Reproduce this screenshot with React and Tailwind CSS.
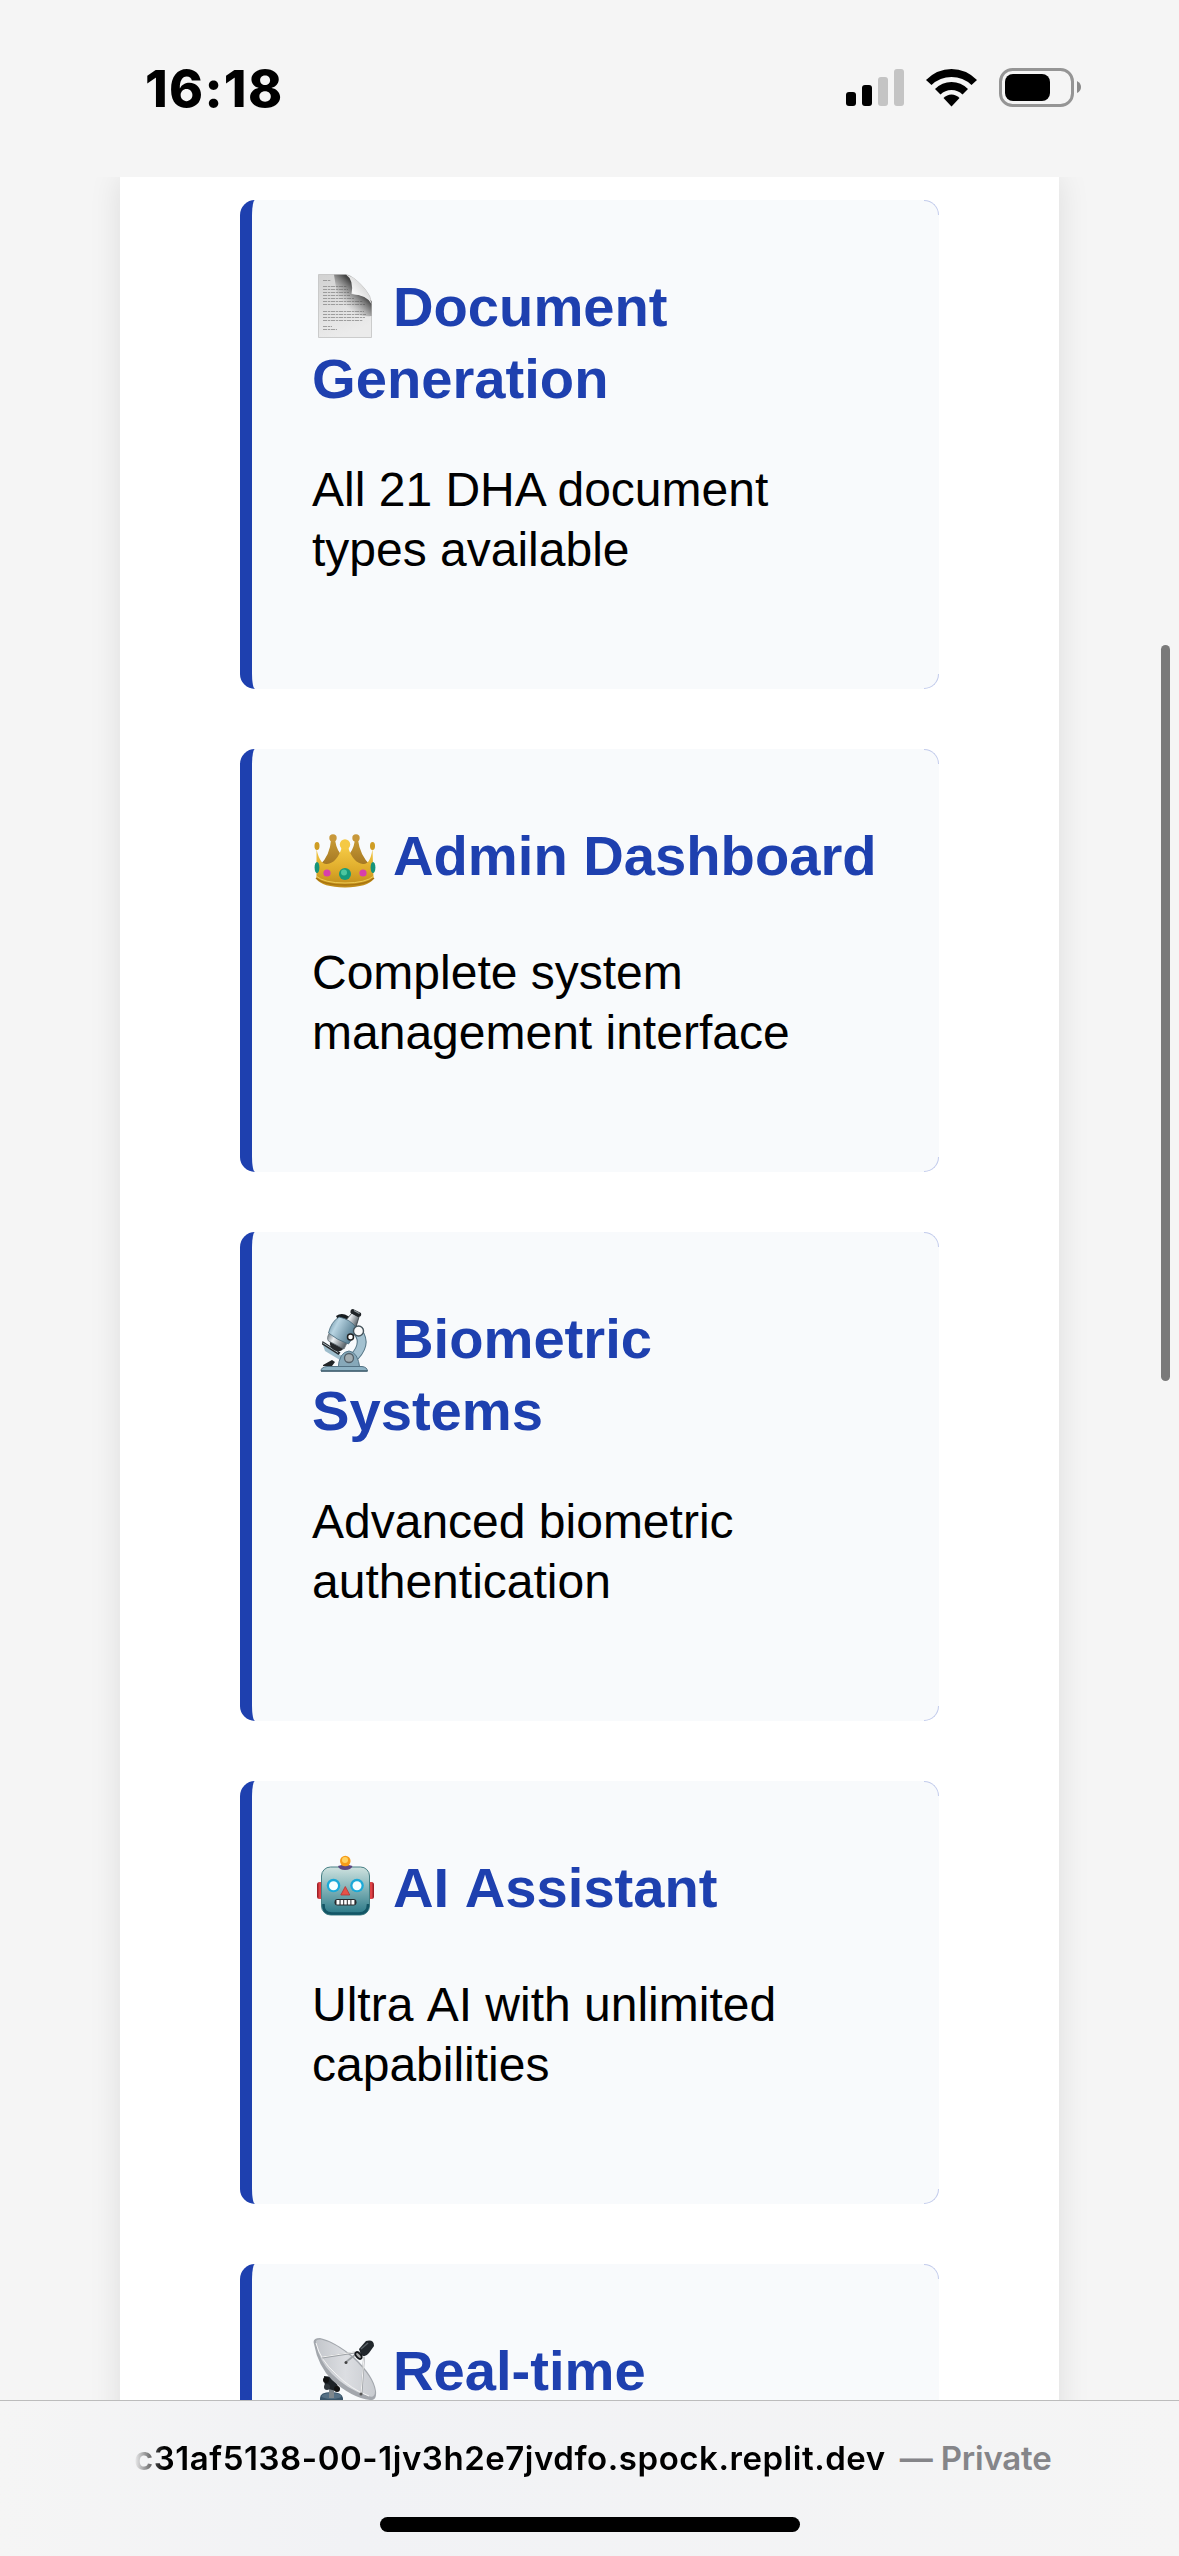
const Doc = () => (
  <svg viewBox="0 0 66 73" className="h-[73px] w-[66px] shrink-0">
    <defs>
      <linearGradient id="docPage" x1="0" y1="0" x2="0.3" y2="1">
        <stop offset="0" stopColor="#d2d2d2" />
        <stop offset="1" stopColor="#ebebeb" />
      </linearGradient>
      <linearGradient id="docShade" x1="0.95" y1="0.05" x2="0.3" y2="0.75">
        <stop offset="0" stopColor="#111" />
        <stop offset="0.45" stopColor="#222" stopOpacity="0.8" />
        <stop offset="1" stopColor="#888" stopOpacity="0" />
      </linearGradient>
      <linearGradient id="docCurl" x1="0.1" y1="0.9" x2="0.7" y2="0.3">
        <stop offset="0" stopColor="#b4b4b4" />
        <stop offset="0.4" stopColor="#f7f7f7" />
        <stop offset="1" stopColor="#d5d5d5" />
      </linearGradient>
    </defs>
    <path d="M6.5 4.5H34Q42 6 53 19Q59 26 59.5 33V67.5H6.5Z" fill="url(#docPage)" stroke="#c2c2c2" strokeWidth="0.8" />
    <g stroke="#8b8b8b" strokeWidth="0.8" strokeDasharray="4 0.8 2.5 0.7">
      <path d="M11 10.5h8M11 16.5h24M11 19.5h25M11 22.5h26M11 25.5h27M11 28.5h31M11 31.5h40M11 34.5h42M11 41.5h41M11 44.5h43M11 47.5h42M11 50.5h40M11 56.5h9M11 59.5h14" />
    </g>
    <path d="M22 4.8H34Q40 6 42 10L41 24Q54 25 59.5 31V46Q38 48 26 30Z" fill="url(#docShade)" />
    <path d="M34 4.5Q42 10 39.5 24Q55 25 59.5 34Q58 24 49 15Q41 6 34 4.5Z" fill="url(#docCurl)" />
  </svg>
);

const Crown = () => (
  <svg viewBox="0 0 66 73" className="h-[73px] w-[66px] shrink-0">
    <defs>
      <linearGradient id="crownFront" x1="0" y1="0" x2="0" y2="1">
        <stop offset="0" stopColor="#f5ca45" />
        <stop offset="0.55" stopColor="#dfac2b" />
        <stop offset="1" stopColor="#bd8a18" />
      </linearGradient>
      <linearGradient id="crownBack" x1="0" y1="0" x2="0" y2="1">
        <stop offset="0" stopColor="#c79a35" />
        <stop offset="1" stopColor="#96691c" />
      </linearGradient>
    </defs>
    <path d="M8 46Q18 36 19 21H23Q25 33 31 37L33 46L35 37Q41 33 43 21H46Q48 36 58 46L50 56H14Z" fill="url(#crownBack)" />
    <circle cx="21" cy="19" r="3.7" fill="#c8983a" />
    <circle cx="44" cy="19" r="3.7" fill="#c8983a" />
    <path d="M4.5 30Q8 46 15 45Q25 44 30 28H36Q41 44 51 45Q58 46 60.5 30L61.5 60Q56 68 33 68.5Q10 68 4.500 60Z" fill="url(#crownFront)" />
    <ellipse cx="5" cy="27" rx="2.5" ry="4" fill="#cf9d24" />
    <ellipse cx="60.5" cy="27" rx="2.5" ry="4" fill="#cf9d24" />
    <circle cx="33" cy="25.5" r="5.2" fill="#f5c945" />
    <path d="M4 59Q12 66 33 66T62 59" fill="none" stroke="#a87410" strokeWidth="1.5" />
    <path d="M4 57Q12 64 33 64T62 57" fill="none" stroke="#f8d862" strokeWidth="0.8" />
    <ellipse cx="5" cy="48.5" rx="2.4" ry="5.5" fill="#16947a" />
    <ellipse cx="61" cy="48.5" rx="2.4" ry="5.500" fill="#16947a" />
    <circle cx="33" cy="55" r="6" fill="#169a7c" />
    <circle cx="32" cy="53.5" r="3" fill="#4cc6a0" />
    <circle cx="15" cy="54" r="3.6" fill="#d83fac" />
    <circle cx="51" cy="54" r="3.6" fill="#d83fac" />
  </svg>
);

const Microscope = () => (
  <svg viewBox="0 0 66 73" className="h-[73px] w-[66px] shrink-0">
    <defs>
      <linearGradient id="scopeTube" x1="0" y1="0" x2="1" y2="0.5">
        <stop offset="0" stopColor="#547b8f" />
        <stop offset="0.35" stopColor="#b8d4e2" />
        <stop offset="1" stopColor="#52798d" />
      </linearGradient>
      <linearGradient id="scopeSteel" x1="0" y1="0" x2="1" y2="0.5">
        <stop offset="0" stopColor="#626b70" />
        <stop offset="0.4" stopColor="#edf1f4" />
        <stop offset="1" stopColor="#59636a" />
      </linearGradient>
    </defs>
    <path d="M46 30Q56 43 39 58" fill="none" stroke="#567686" strokeWidth="9.5" />
    <path d="M46 30Q56 43 39 58" fill="none" stroke="#a3c1d0" strokeWidth="7.5" />
    <path d="M11 43L30 54L28 58L13 49Z" fill="#9ebdcc" />
    <path d="M10.5 39L28.500 50.5L26.5 53L10 42.500Z" fill="#252a2e" />
    <path d="M11 41L26 50.500" stroke="#a8b3b8" strokeWidth="1" />
    <path d="M26 67Q27 50 37 49Q46 50 48 67Z" fill="#86a8b9" stroke="#567789" />
    <path d="M11 63L20 58L23 60L20 64H11Z" fill="#202427" />
    <path d="M9 69Q9 65 15 64.5H50Q55 65 55.5 69Z" fill="#8eb3c5" stroke="#527183" strokeWidth="1" />
    <path d="M9 69H55.500" stroke="#456272" strokeWidth="1.500" />
    <circle cx="37" cy="56" r="4.5" fill="#a3adb1" stroke="#536069" strokeWidth="1.3" />
    <path d="M24 14Q33 8 43 21Q46 26 44 29L30 25Z" fill="#181c20" />
    <path d="M40 11L47 15L44 25L33 19Z" fill="url(#scopeSteel)" stroke="#30383d" strokeWidth="0.800" />
    <path d="M41 7L49 11Q50 15 46 15L38.500 11Q38 7 41 7Z" fill="#202428" />
    <path d="M42 8.500L47.500 11.500" stroke="#92999d" strokeWidth="1.200" />
    <path d="M18 39L32 46Q29 51 22 48Q17 45 18 39Z" fill="#26292c" />
    <path d="M18 30L36 39L32 47L16.500 39Q14 36 18 30Z" fill="url(#scopeSteel)" stroke="#687278" strokeWidth="0.800" />
    <path d="M27 15Q38 17 44.500 26Q43 34 36.500 42Q25 38 16.500 31Q19 20 27 15Z" fill="url(#scopeTube)" stroke="#47687a" strokeWidth="0.800" />
    <circle cx="46.500" cy="29" r="5" fill="#fafafa" stroke="#46545c" strokeWidth="1.400" />
    <circle cx="38.500" cy="35" r="3" fill="#fff" stroke="#222" strokeWidth="1.500" />
  </svg>
);

const Robot = () => (
  <svg viewBox="0 0 66 73" className="h-[73px] w-[66px] shrink-0">
    <defs>
      <linearGradient id="robotFace" x1="0" y1="0" x2="0" y2="1">
        <stop offset="0" stopColor="#cfe2df" />
        <stop offset="0.4" stopColor="#8bb9bd" />
        <stop offset="1" stopColor="#277685" />
      </linearGradient>
      <linearGradient id="robotEar" x1="0" y1="0" x2="1" y2="0">
        <stop offset="0" stopColor="#8e1720" />
        <stop offset="0.5" stopColor="#ef4b4e" />
        <stop offset="1" stopColor="#8e1720" />
      </linearGradient>
    </defs>
    <rect x="5" y="31" width="6" height="17" rx="2.5" fill="url(#robotEar)" />
    <rect x="56" y="31" width="6" height="17" rx="2.5" fill="url(#robotEar)" />
    <rect x="9.5" y="16" width="48" height="48" rx="9" fill="url(#robotFace)" stroke="#467f84" strokeWidth="1" />
    <path d="M11.5 53Q11 62.500 20 62.500H47Q56 62.500 56 53" fill="none" stroke="#135565" strokeWidth="2.5" />
    <path d="M26 15Q33 12 40.5 15Q39 19 33 19T26 15Z" fill="#5b4681" />
    <path d="M29.5 10h7.5v4.500h-7.5z" fill="#ed8a15" />
    <circle cx="33.3" cy="10" r="5.3" fill="#f59c1a" />
    <circle cx="33" cy="9" r="3" fill="#ffd261" />
    <circle cx="21.5" cy="34.5" r="6.800" fill="#1aa9d8" />
    <circle cx="45" cy="34.5" r="6.800" fill="#1aa9d8" />
    <circle cx="21.5" cy="34.8" r="4.5" fill="#f7ffff" />
    <circle cx="45" cy="34.8" r="4.5" fill="#f7ffff" />
    <path d="M33.3 35.5L37.8 44H28.8Z" fill="#e75248" stroke="#b53434" strokeWidth="0.8" strokeLinejoin="round" />
    <rect x="22.5" y="48" width="22" height="6.5" rx="3.25" fill="#272a2d" />
    <path d="M24.5 49h3v4.500h-3zM28.600 49h2.600v4.500h-2.600zM32.200 49h2.600v4.500h-2.600zM35.800 49h2.600v4.500h-2.600zM39.400 49h3v4.500h-3z" fill="#fff" />
  </svg>
);

const Dish = () => (
  <svg viewBox="0 0 66 73" className="h-[73px] w-[66px] shrink-0">
    <defs>
      <linearGradient id="dishBowl" x1="0" y1="0.5" x2="1" y2="0.5">
        <stop offset="0" stopColor="#c3c6cb" />
        <stop offset="0.5" stopColor="#dcdee2" />
        <stop offset="1" stopColor="#c8cbd0" />
      </linearGradient>
    </defs>
    <path d="M8 64Q8 58 19 58T31 64V68Q20 72 8 68Z" fill="#39556a" />
    <ellipse cx="19.5" cy="62" rx="10" ry="3" fill="#557085" />
    <path d="M17 50h5v14h-5z" fill="#7e878d" />
    <path d="M12 42L21 43L27 54L24 57L13 54Z" fill="#1d2227" />
    <circle cx="14" cy="46" r="3" fill="#111" />
    <circle cx="15" cy="53" r="3" fill="#30363b" />
    <circle cx="25" cy="55" r="3" fill="#111" />
    <path d="M2 10Q0 4 8 4Q22 7 42 23Q62 42 64 57Q65 67 58 66Q40 64 20 46Q6 32 2 10Z" fill="#a3a7ad" />
    <path d="M4 9Q3 5 9 5.500Q23 8.500 41 24Q61 43 63 57Q63 66 54 61Q36 56 20 40Q7 27 4 9Z" fill="url(#dishBowl)" />
    <path d="M4 9Q8 26 24 40Q40 56 57 62" fill="none" stroke="#f4f4f4" strokeWidth="1" />
    <path d="M10 23.500L43 18.500M34 28L46 18.500M52 23L49.500 60" fill="none" stroke="#9da1a5" strokeWidth="1.800" />
    <path d="M10 23L43 18M52 23L49 60" fill="none" stroke="#f1f1f1" strokeWidth="1" />
    <circle cx="34" cy="28.5" r="1.5" fill="#444" />
    <circle cx="49" cy="60" r="1.5" fill="#555" />
    <path d="M47 15L54 7Q62 5 62 12L57 19Q53 24 49 21Z" fill="#22272c" />
    <path d="M49 15L56 9" stroke="#5a6167" strokeWidth="1.5" />
    <ellipse cx="46.5" cy="21.5" rx="4" ry="2.2" transform="rotate(50 46.5 21.5)" fill="#aaa" stroke="#15181b" strokeWidth="1.800" />
  </svg>
);

const cards = [
  { Icon: Doc, title: "Document", rest: "Generation", lines: ["All 21 DHA document", "types available"] },
  { Icon: Crown, title: "Admin Dashboard", lines: ["Complete system", "management interface"] },
  { Icon: Microscope, title: "Biometric", rest: "Systems", lines: ["Advanced biometric", "authentication"] },
  { Icon: Robot, title: "AI Assistant", lines: ["Ultra AI with unlimited", "capabilities"], unkerned: true },
  { Icon: Dish, title: "Real-time", lines: [] },
];

function Card({ Icon, title, rest, lines, unkerned }) {
  return (
    <section
      className={`${rest ? "h-[489px]" : "h-[423px]"} ${unkerned ? "[font-kerning:none]" : ""} relative shrink-0 rounded-[15px] border-l-[12px] border-[#1e40af] bg-[#f8fafc] pt-[70px] pl-[60px] whitespace-nowrap`}
    >
      <h3 className="text-[56.16px] leading-[73px] font-bold text-[#1e40af]">
        <span className="flex gap-[15px]">
          <Icon />
          {title}
        </span>
        {rest && <span className="-mt-px block">{rest}</span>}
      </h3>
      <p className={`${rest ? "mt-[45px]" : "mt-[51px]"} text-[48px] leading-[60px] text-black`}>
        {lines.map((l) => (
          <span key={l} className="block">{l}</span>
        ))}
      </p>
      <i className="absolute top-0 right-0 size-[15px] rounded-tr-[15px] border-t border-r border-[#c3ccec]" />
      <i className="absolute right-0 bottom-0 size-[15px] rounded-br-[15px] border-r border-b border-[#c3ccec]" />
    </section>
  );
}

function StatusBar() {
  return (
    <header className="flex h-[177px] shrink-0 items-start justify-between pt-[57px] pr-[97px] pl-[145px]">
      <div className="font-[Inter] text-[51.5px] leading-[62px] font-extrabold tracking-[1.3px] text-black">16:18</div>
      <svg viewBox="846 57 236 62" className="h-[62px] w-[236px]">
        <rect x="846" y="92" width="10" height="14" rx="3" />
        <rect x="862" y="85" width="10" height="21" rx="3" />
        <rect x="878" y="77" width="10" height="29" rx="3" fill="#c4c4c4" />
        <rect x="894" y="69" width="10" height="37" rx="3" fill="#c4c4c4" />
        <path d="M926 80Q937 69 951.5 69T977 80L971.5 85Q963 77 951.5 77T931.5 85Z" />
        <path d="M935 89Q942 82 951.5 82T968 89L962.5 94.5Q958 90 951.5 90T940.5 94.5Z" />
        <path d="M943.5 98Q947 94.5 951.5 94.5T959.5 98L951.5 106.5Z" />
        <rect x="1000.5" y="69.5" width="72" height="36" rx="12" fill="none" stroke="#959595" strokeWidth="3" />
        <rect x="1005" y="74" width="45" height="27" rx="8" />
        <path d="M1077 81Q1081 83 1081 87T1077 93Z" fill="#8a8a8a" />
      </svg>
    </header>
  );
}

export default function App() {
  return (
    <div className="relative flex h-[2556px] w-[1179px] flex-col overflow-hidden bg-[#f5f5f5] font-['Liberation_Sans',Arial,sans-serif]">
      <StatusBar />
      <div className="h-[2223px] shrink-0 overflow-hidden px-[120px]">
        <main className="flex h-[2400px] flex-col gap-[60px] bg-white px-[120px] pt-[23px] shadow-[0_0_30px_rgba(0,0,0,0.1)]">
          {cards.map((c) => (
            <Card key={c.title} {...c} />
          ))}
        </main>
      </div>
      <footer className="flex h-[156px] shrink-0 flex-col items-center border-t border-[#bcbcbc] bg-linear-to-r from-[#f5f5f5] via-[#f1f2f5] via-30% to-[#f5f5f5] font-[Inter]">
        <div className="mt-[35px] flex h-[44px] w-[924px] items-center justify-end text-[33px] leading-[44px] font-semibold whitespace-nowrap">
          <span className="bg-linear-to-r from-transparent to-black to-[30px] bg-clip-text tracking-[0.55px] text-transparent">
            c31af5138-00-1jv3h2e7jvdfo.spock.replit.dev
          </span>
          <span className="ml-[14px] tracking-[-0.2px] text-[#858589]">— Private</span>
        </div>
        <div className="mt-[37px] h-[15px] w-[420px] rounded-full bg-black" />
      </footer>
      <div className="absolute top-[645px] left-[1161px] h-[736px] w-[9px] rounded-full bg-[#7a7a7a]" />
    </div>
  );
}
